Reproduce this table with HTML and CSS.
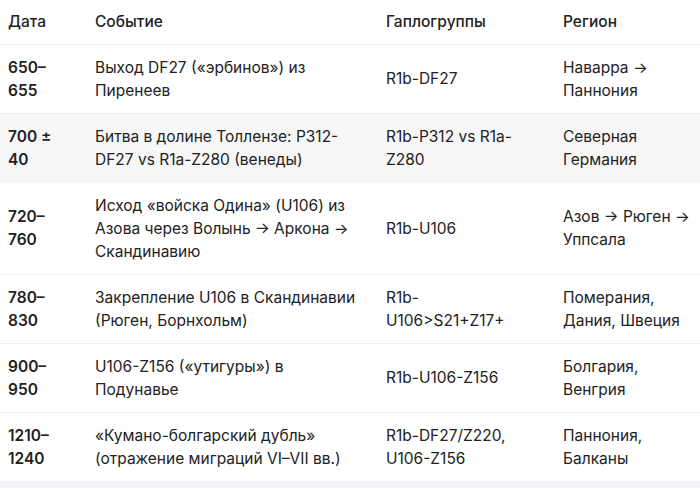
FILE: index.html
```html
<!DOCTYPE html>
<html lang="ru">
<head>
<meta charset="utf-8">
<link rel="stylesheet" href="styles.css">
</head>
<body>
<div class="wrap">
<table class="tbl">
  <colgroup>
    <col class="c1"><col class="c2"><col class="c3"><col class="c4">
  </colgroup>
  <thead>
    <tr><th>Дата</th><th>Событие</th><th>Гаплогруппы</th><th>Регион</th></tr>
  </thead>
  <tbody>
    <tr><td class="d">650–655</td><td>Выход DF27 («эрбинов») из Пиренеев</td><td>R1b-DF27</td><td>Наварра → Паннония</td></tr>
    <tr class="hl"><td class="d">700 ± 40</td><td>Битва в долине Толлензе: P312-DF27 vs R1a-Z280 (венеды)</td><td>R1b-P312 vs R1a-Z280</td><td>Северная Германия</td></tr>
    <tr><td class="d">720–760</td><td>Исход «войска Одина» (U106) из Азова через Волынь → Аркона → Скандинавию</td><td>R1b-U106</td><td>Азов → Рюген → Уппсала</td></tr>
    <tr><td class="d">780–830</td><td>Закрепление U106 в Скандинавии (Рюген, Борнхольм)</td><td>R1b-U106&gt;S21+Z17+</td><td>Померания, Дания, Швеция</td></tr>
    <tr><td class="d">900–950</td><td>U106-Z156 («утигуры») в Подунавье</td><td>R1b-U106-Z156</td><td>Болгария, Венгрия</td></tr>
    <tr><td class="d">1210–1240</td><td>«Кумано-болгарский дубль» (отражение миграций VI–VII вв.)</td><td>R1b-DF27/Z220, U106-Z156</td><td>Паннония, Балканы</td></tr>
  </tbody>
</table>
</div>
</body>
</html>
```
FILE: styles.css
```css
html, body {
  margin: 0;
  padding: 0;
}
body {
  background: #f2f3f6;
  font-family: "Inter", "Noto Sans", sans-serif;
  color: #222;
  font-size: 15.5px;
  line-height: 23px;
}
.wrap {
  background: #fff;
}
.tbl {
  width: 700px;
  border-collapse: collapse;
  table-layout: fixed;
}
.c1 { width: 87px; }
.c2 { width: 291px; }
.c3 { width: 177px; }
.c4 { width: 145px; }
th {
  text-align: left;
  font-weight: 500;
  height: 44px;
  padding: 0 20px 0 8px;
  box-sizing: border-box;
  vertical-align: middle;
  border-bottom: 1px solid #efefef;
}
td {
  padding: 11px 20px 11px 8px;
  vertical-align: middle;
  border-bottom: 1px solid #efefef;
}
th:last-child, td:last-child {
  padding-right: 2px;
}
td.d {
  font-weight: 600;
}
tr.hl td {
  background: #f7f7f7;
  border-bottom-color: #f7f7f7;
}
tbody tr:last-child td {
  border-bottom: none;
}
```
